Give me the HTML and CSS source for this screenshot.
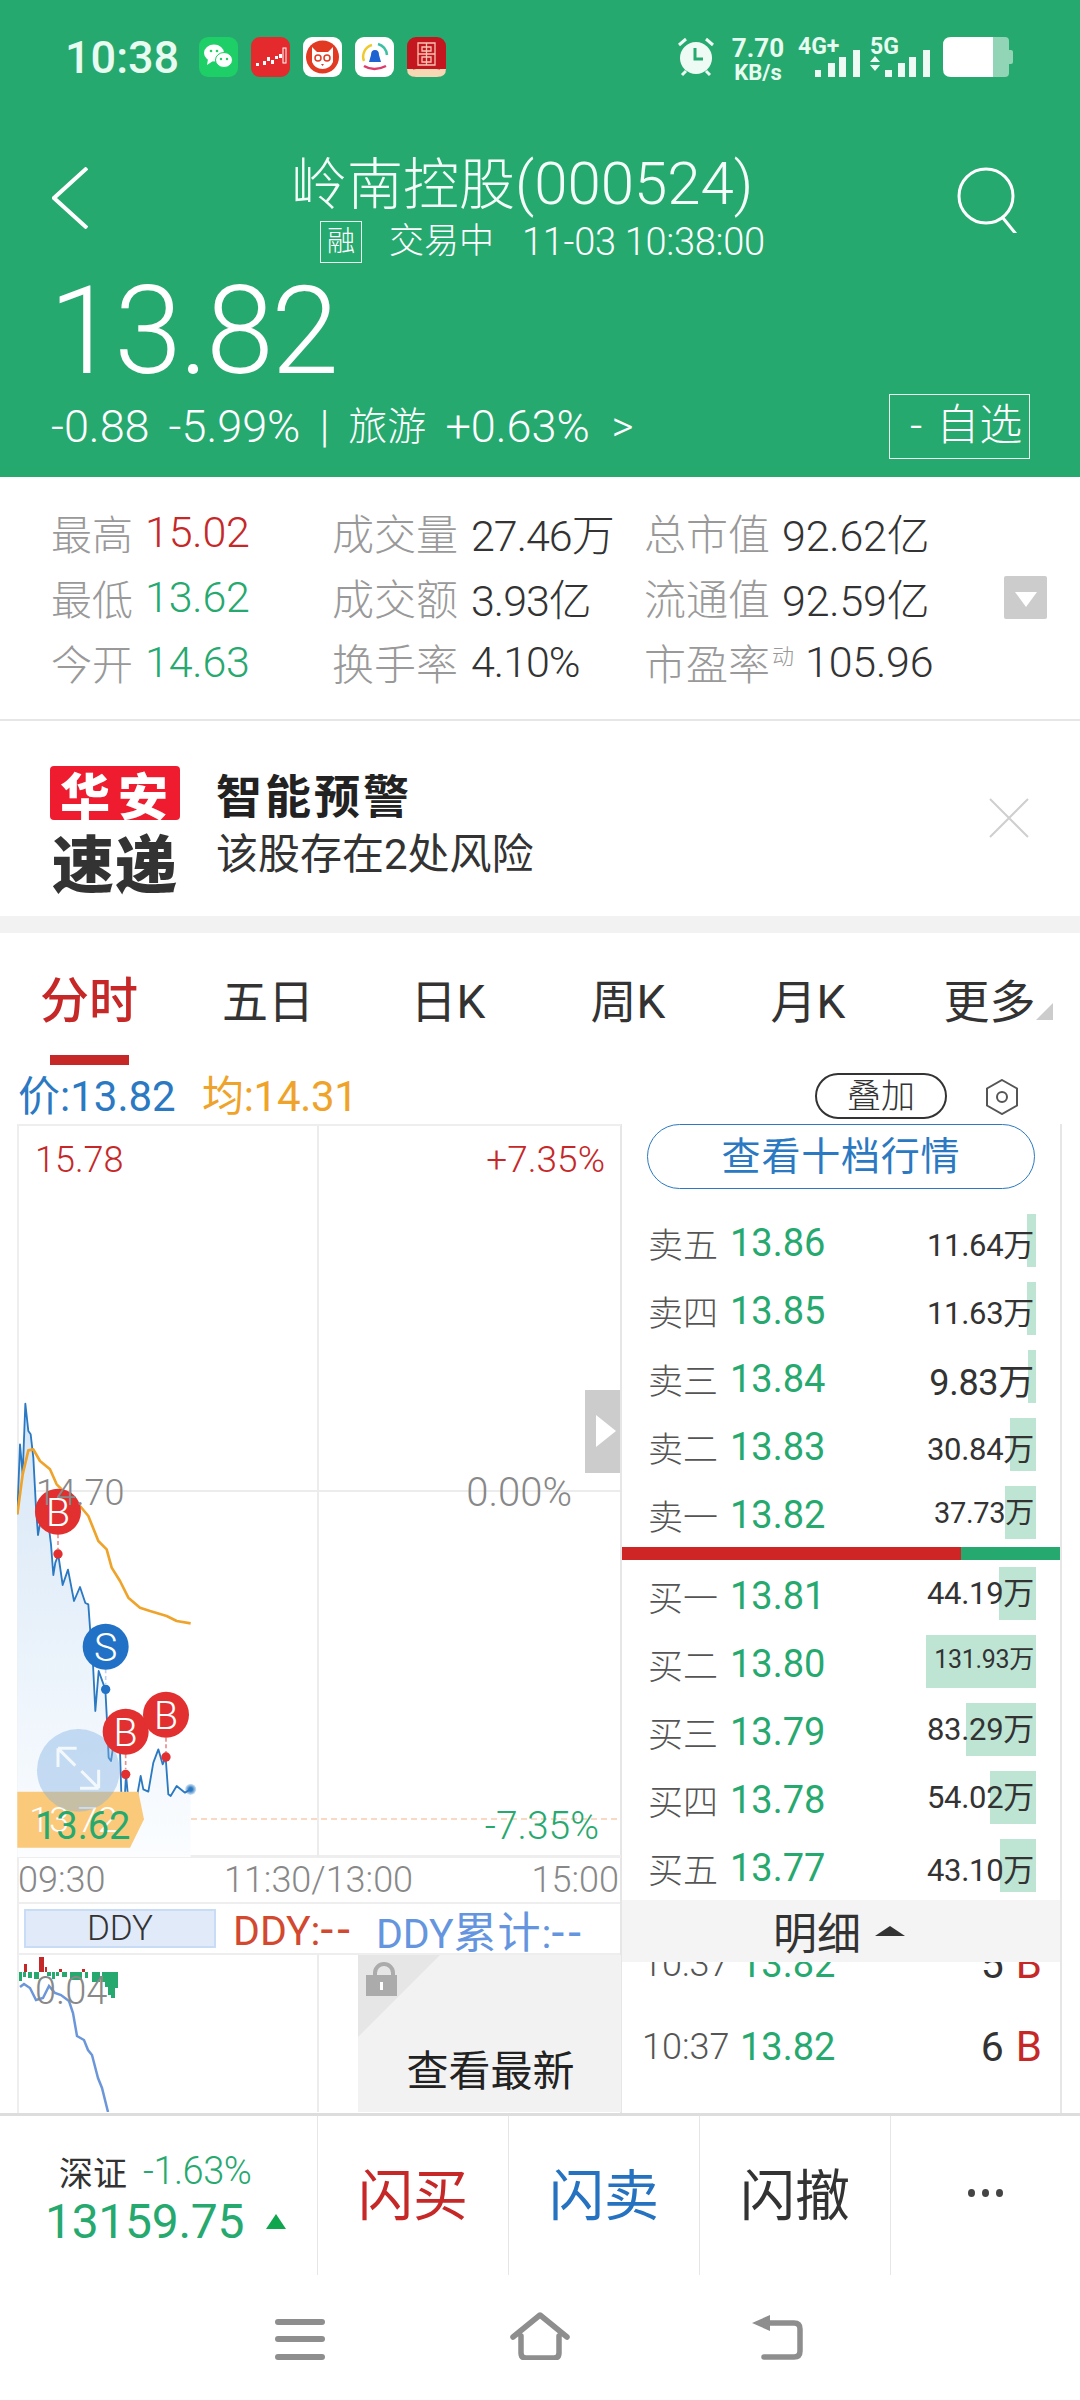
FILE: index.html
```html
<!DOCTYPE html>
<html lang="zh">
<head>
<meta charset="utf-8">
<title>岭南控股</title>
<link rel="stylesheet" href="styles.css">
</head>
<body>
<div class="page">
  <header class="head">
    <div class="status">
      <span class="clock">10:38</span>
      <div class="apps">
        <svg class="app" viewBox="0 0 39 40"><rect width="39" height="40" rx="9" fill="#1DCF66"/><ellipse cx="15" cy="16" rx="10" ry="8.500" fill="#fff"/><path d="M9 22l-1 6 6-4z" fill="#fff"/><ellipse cx="25" cy="23" rx="8.500" ry="7.500" fill="#fff" stroke="#1DCF66"/><circle cx="12" cy="14" r="1.300" fill="#1DCF66"/><circle cx="18" cy="14" r="1.300" fill="#1DCF66"/><circle cx="22" cy="22" r="1.200" fill="#1DCF66"/><circle cx="28" cy="22" r="1.200" fill="#1DCF66"/></svg>
        <svg class="app" viewBox="0 0 39 40"><rect width="39" height="40" rx="9" fill="#E42A2C"/><path d="M5 26h3v3H5zM12 24h3v4h-3zM16 20h3v4h-3zM20 23h3v4h-3zM24 19h3v3h-3zM28 17h3v4h-3z" fill="#fff"/><rect x="32" y="11" width="3" height="15" fill="none" stroke="#fff"/></svg>
        <svg class="app" viewBox="0 0 39 40"><rect width="39" height="40" rx="9" fill="#fff"/><circle cx="19.500" cy="20" r="16.500" fill="#E23A22"/><path d="M9 10l5 5h11l5-5v15q-3 7-10.500 7T9 25z" fill="#fff"/><circle cx="15" cy="21" r="3" fill="none" stroke="#E23A22" stroke-width="1.500"/><circle cx="24" cy="21" r="3" fill="none" stroke="#E23A22" stroke-width="1.500"/><path d="M18 27h3l-1.500 2z" fill="#E23A22"/></svg>
        <svg class="app" viewBox="0 0 39 40"><rect width="39" height="40" rx="9" fill="#fff"/><path d="M9 24A12 12 0 0 1 17 8" fill="none" stroke="#EFC92F" stroke-width="2.500"/><path d="M23 7a13 13 0 0 1 9 11" fill="none" stroke="#3EC0A5" stroke-width="2.500"/><path d="M9 29q10 6 22 0" fill="none" stroke="#DC3A6B" stroke-width="2.500"/><path d="M20 13q4 0 4 5l2 7H14l2-7q0-5 4-5z" fill="#1E63D2"/></svg>
        <svg class="app" viewBox="0 0 39 40"><rect width="39" height="40" rx="9" fill="#C4161E"/><path d="M0 32h39q0 8-9 8H9q-9 0-9-8z" fill="#F6D8B4"/><path d="M6 32l13.500-2L33 32" fill="none" stroke="#C4161E"/><path d="M11 6h17v22H11zM11 17h17M19.500 6v22M15 10h9v4h-9zM15 20h9v5h-9z" fill="none" stroke="#F5C6B4" stroke-width="1.300"/></svg>
      </div>
      <div class="sysicons">
        <svg class="alarm" viewBox="0 0 40 40"><circle cx="20" cy="21" r="16" fill="#EDFBF4"/><path d="M3 8l7-6M37 8l-7-6M6 38l4-4M34 38l-4-4" stroke="#EDFBF4" stroke-width="3" fill="none"/><path d="M19 11v11h8" stroke="#26A96F" stroke-width="3" fill="none"/></svg>
        <div class="speed"><span class="speed-num">7.70</span><span class="speed-unit">KB/s</span></div>
        <div class="signal signal-4g">
          <span class="net">4G+</span>
          <svg class="bars" viewBox="0 0 46 27"><path d="M1 27V20h6v7zM14 27V13h7v14zM25 27V7h7v20zM39 27V0h7v27z" fill="#EDFBF4"/></svg>
        </div>
        <div class="signal signal-5g">
          <span class="net">5G</span>
          <svg class="bars bars-5g" viewBox="0 0 60 27"><path d="M0 12l5-6 5 6zM0 15h10l-5 6zM15 27V20h7v7zM28 27V13h7v14zM39 27V7h7v20zM53 27V0h7v27z" fill="#EDFBF4"/></svg>
        </div>
        <svg class="battery" viewBox="0 0 70 40"><path d="M50 0h12q4 0 4 4v32q0 4-4 4H50zM66 13h2q2 0 2 2v10q0 2-2 2h-2z" fill="#92D4B6"/><path d="M8 0h42v40H8q-8 0-8-8V8q0-8 8-8z" fill="#fff"/></svg>
      </div>
    </div>
    <div class="topbar">
      <svg class="back" viewBox="0 0 36 62"><path d="M35 1L2 31l33 30" fill="none" stroke="#fff" stroke-width="4"/></svg>
      <div class="ident">
        <h1 class="title">岭南控股<span class="title-code">(000524)</span></h1>
        <div class="sub"><span class="margin-tag">融</span><span class="trading">交易中</span><span class="stamp">11-03 10:38:00</span></div>
      </div>
      <svg class="search" viewBox="0 0 66 66"><circle cx="30" cy="29" r="27" fill="none" stroke="#fff" stroke-width="3"/><path d="M47 51l16 13" fill="none" stroke="#fff" stroke-width="3" transform="rotate(12 47 51)"/></svg>
    </div>
    <div class="price">13.82</div>
    <div class="change">
      <div class="change-text"><span>-0.88</span><span>-5.99%</span><span class="pipe">|</span><span class="sector">旅游</span><span>+0.63%</span><span class="chev">&gt;</span></div>
      <div class="watch"><span class="watch-minus">-</span>自选</div>
    </div>
  </header>

  <section class="stats">
    <div class="stat-grid">
      <div class="stat s1"><span class="lab">最高</span><span class="up">15.02</span></div>
      <div class="stat s2"><span class="lab">成交量</span><span class="val">27.46万</span></div>
      <div class="stat s3"><span class="lab">总市值</span><span class="val">92.62亿</span></div>
      <div class="stat s1"><span class="lab">最低</span><span class="dn">13.62</span></div>
      <div class="stat s2"><span class="lab">成交额</span><span class="val">3.93亿</span></div>
      <div class="stat s3"><span class="lab">流通值</span><span class="val">92.59亿</span></div>
      <div class="stat s1"><span class="lab">今开</span><span class="dn">14.63</span></div>
      <div class="stat s2"><span class="lab">换手率</span><span class="val">4.10%</span></div>
      <div class="stat s3"><span class="lab">市盈率<sup class="dyn">动</sup></span><span class="val val-pe">105.96</span></div>
    </div>
    <div class="more-btn"></div>
  </section>

  <section class="alert">
    <div class="alert-logo"><span class="logo-red">华安</span><span class="logo-dark">速递</span></div>
    <div class="alert-text"><strong class="alert-title">智能预警</strong><span class="alert-body">该股存在2处风险</span></div>
    <svg class="alert-close" viewBox="0 0 40 40"><path d="M1 1l38 38M39 1L1 39" stroke="#cfcfcf" stroke-width="2" fill="none"/></svg>
  </section>
  <div class="band"></div>

  <nav class="tabs">
    <span class="tab tab-on">分时</span><span class="tab">五日</span><span class="tab">日K</span><span class="tab">周K</span><span class="tab">月K</span><span class="tab tab-more">更多</span>
  </nav>

  <div class="legend">
    <span class="leg-price">价:13.82</span><span class="leg-avg">均:14.31</span>
    <span class="overlay-btn">叠加</span>
    <svg class="hex" viewBox="0 0 36 36"><path d="M18 1l15 8.500v17L18 35 3 26.500v-17z" fill="none" stroke="#555" stroke-width="2"/><circle cx="18" cy="18" r="5" fill="none" stroke="#555" stroke-width="2"/></svg>
  </div>

  <main class="body">
    <div class="charts">
      <div class="chart">
        <svg class="chart-svg" viewBox="17 1125 603 731">
          <defs>
            <linearGradient id="area" x1="0" y1="0" x2="0" y2="1"><stop offset="0" stop-color="#D6E6F6"/><stop offset="1" stop-color="#FBFDFF"/></linearGradient>
            <radialGradient id="glow"><stop offset="0.3" stop-color="#2B79C2"/><stop offset="1" stop-color="#2B79C2" stop-opacity=".15"/></radialGradient>
          </defs>
          <path d="M17 1490H620M318 1125V1856" stroke="#ECECEC" stroke-width="2" fill="none"/>
          <path d="M141 1818H620" stroke="#F7CDB0" stroke-width="1.500" stroke-dasharray="6 4" fill="none"/>
          <g transform="translate(0 1380) scale(.33333)">
            <path d="M52 400L60 190 68 280 76 68 85 150 92 160 100 230 108 380 114 462 125 400 148 450 153 490 160 582 166 545 175 522 188 612 204 566 222 660 240 618 256 666 265 670 270 740 278 830 286 990 296 870 316 925 320 1000 326 1130 333 1140 345 1060 360 1110 368 1365 378 1180 388 1290 400 1245 412 1240 422 1185 430 1225 445 1232 460 1145 475 1105 488 1150 497 1130 505 1240 512 1245 530 1215 555 1235 572 1225V1428H52Z" fill="url(#area)"/>
            <path d="M52 400L60 190 68 280 76 68 85 150 92 160 100 230 108 380 114 462 125 400 148 450 153 490 160 582 166 545 175 522 188 612 204 566 222 660 240 618 256 666 265 670 270 740 278 830 286 990 296 870 316 925 320 1000 326 1130 333 1140 345 1060 360 1110 368 1365 378 1180 388 1290 400 1245 412 1240 422 1185 430 1225 445 1232 460 1145 475 1105 488 1150 497 1130 505 1240 512 1245 530 1215 555 1235 572 1225" fill="none" stroke="#2B79C2" stroke-width="5.500" stroke-linejoin="round"/>
            <path d="M52 400L68 280 85 208 100 205 120 240 150 265 170 310 205 345 240 375 265 405 295 480 320 505 335 560 360 600 385 650 420 680 450 690 500 705 530 720 572 727" fill="none" stroke="#EFA32A" stroke-width="8" stroke-linejoin="round"/>
            <circle cx="572" cy="1225" r="17" fill="url(#glow)"/>
            <path d="M52 1232H415L432 1315 390 1400H52Z" fill="#FBC97A"/>
            <text class="tag-under" x="88" y="1352">13.72</text>
            <circle cx="235" cy="1168" r="124" fill="#7FB0E2" fill-opacity=".42"/>
            <path d="M174 1102l52 52M174 1102h56M174 1102v56M296 1222l-52-52M296 1222h-56M296 1222v-56" stroke="#fff" stroke-opacity=".8" stroke-width="9" fill="none"/>
            <g class="mark mark-buy"><path class="mark-dash" d="M174 460V505"/><circle cx="174" cy="519" r="14"/><circle cx="174" cy="392" r="69"/><text x="174" y="435">B</text></g>
            <g class="mark mark-sell"><path class="mark-dash" d="M317 865V910"/><circle cx="317" cy="925" r="14"/><circle cx="317" cy="797" r="69"/><text x="317" y="840">S</text></g>
            <g class="mark mark-buy"><path class="mark-dash" d="M377 1120V1165"/><circle cx="377" cy="1180" r="14"/><circle cx="377" cy="1052" r="69"/><text x="377" y="1095">B</text></g>
            <g class="mark mark-buy"><path class="mark-dash" d="M498 1070V1115"/><circle cx="498" cy="1128" r="14"/><circle cx="498" cy="1001" r="69"/><text x="498" y="1044">B</text></g>
          </g>
        </svg>
        <span class="axis axis-tl up">15.78</span>
        <span class="axis axis-tr up">+7.35%</span>
        <span class="axis axis-ml">14.70</span>
        <span class="axis axis-mr">0.00%</span>
        <span class="axis axis-bl dn">13.62</span>
        <span class="axis axis-br dn">-7.35%</span>
        <div class="chart-arrow"></div>
      </div>
      <div class="times"><span>09:30</span><span>11:30/13:00</span><span>15:00</span></div>
      <div class="ddy"><span class="ddy-tag">DDY</span><span class="ddy-a">DDY:<span class="ddy-dash">--</span></span><span class="ddy-b">DDY<span class="ddy-cum">累计</span>:<span class="ddy-dash">--</span></span></div>
      <div class="lower">
        <svg class="lower-svg" viewBox="17 1955 341 157">
          <path d="M318 1955V2112" stroke="#ECECEC" stroke-width="2"/>
          <path d="M24 1964h3v8h-3zM39 1957h5v15h-5zM45 1967h2v5h-2zM59 1969h3v3h-3zM82 1969h3v3h-3z" fill="#C62828"/>
          <path d="M19 1972h3v9h-3zM23 1972h3v5h-3zM28 1972h4v6h-4zM34 1972h5v7h-5zM47 1972h4v4h-4zM52 1972h3v7h-3zM56 1972h3v4h-3zM62 1972h5v5h-5zM70 1972h12v8h-12zM85 1972h3v6h-3zM92 1972h8v10h-8zM102 1972h3v10h-3zM105 1972h3v15h-3zM108 1972h3v23h-3zM111 1972h4v26h-4zM115 1972h3v16h-3z" fill="#26A96F"/>
          <path d="M20 1987L24 1984 30 1988 36 2000 43 1998 49 1986 55 1993 61 1995 69 2001 73 2013 77 2036 84 2040 88 2050 92 2055 98 2078 102 2088 108 2112" fill="none" stroke="#6C96DA" stroke-width="2.500"/>
        </svg>
        <span class="lower-val">0.04</span>
        <div class="locked">
          <svg class="lock" viewBox="0 0 82 82"><path d="M0 0h82L0 82z" fill="#E6E6E6"/><path d="M14 18v-3a9 9 0 0 1 18 0v3" transform="translate(3 3)" fill="none" stroke="#ABABAB" stroke-width="4"/><rect x="8" y="20" width="31" height="21" fill="#ABABAB"/><rect x="22" y="27" width="3" height="8" fill="#fff"/></svg>
          <span class="locked-text">查看最新</span>
        </div>
      </div>
    </div>

    <aside class="book">
      <div class="ten">查看十档行情</div>
      <div class="quotes">
        <div class="quote"><i class="depth" style="width:9px"></i><span class="q-lab">卖五</span><span class="q-price">13.86</span><span class="q-vol">11.64万</span></div>
        <div class="quote"><i class="depth" style="width:9px"></i><span class="q-lab">卖四</span><span class="q-price">13.85</span><span class="q-vol">11.63万</span></div>
        <div class="quote"><i class="depth" style="width:8px"></i><span class="q-lab">卖三</span><span class="q-price">13.84</span><span class="q-vol q-big">9.83万</span></div>
        <div class="quote"><i class="depth" style="width:26px"></i><span class="q-lab">卖二</span><span class="q-price">13.83</span><span class="q-vol">30.84万</span></div>
        <div class="quote"><i class="depth" style="width:31px"></i><span class="q-lab">卖一</span><span class="q-price">13.82</span><span class="q-vol q-small q-lift">37.73万</span></div>
      </div>
      <div class="ratio"><i class="ratio-buy"></i><i class="ratio-sell"></i></div>
      <div class="quotes quotes-buy">
        <div class="quote"><i class="depth" style="width:37px"></i><span class="q-lab">买一</span><span class="q-price">13.81</span><span class="q-vol q-lift">44.19万</span></div>
        <div class="quote"><i class="depth" style="width:110px"></i><span class="q-lab">买二</span><span class="q-price">13.80</span><span class="q-vol q-tiny q-lift2">131.93万</span></div>
        <div class="quote"><i class="depth" style="width:70px"></i><span class="q-lab">买三</span><span class="q-price">13.79</span><span class="q-vol q-lift">83.29万</span></div>
        <div class="quote"><i class="depth" style="width:46px"></i><span class="q-lab">买四</span><span class="q-price">13.78</span><span class="q-vol q-lift">54.02万</span></div>
        <div class="quote"><i class="depth" style="width:36px"></i><span class="q-lab">买五</span><span class="q-price">13.77</span><span class="q-vol">43.10万</span></div>
      </div>
      <div class="detail-bar">明细<i class="detail-caret"></i></div>
      <div class="trades">
        <div class="trade"><span class="t-time">10:37</span><span class="t-price">13.82</span><span class="t-vol">5</span><span class="t-side">B</span></div>
        <div class="trade"><span class="t-time">10:37</span><span class="t-price">13.82</span><span class="t-vol">6</span><span class="t-side">B</span></div>
      </div>
    </aside>
  </main>

  <footer class="dock">
    <div class="index">
      <div class="index-top"><span class="index-name">深证</span><span class="index-pct">-1.63%</span></div>
      <div class="index-main"><span class="index-num">13159.75</span><i class="index-arrow"></i></div>
    </div>
    <div class="act act-buy">闪买</div>
    <div class="act act-sell">闪卖</div>
    <div class="act act-undo">闪撤</div>
    <div class="act act-more"><i></i><i></i><i></i></div>
  </footer>

  <div class="sysnav">
    <svg class="nav-menu" viewBox="0 0 50 42"><path d="M3 3h44M3 20h44M3 38h44" stroke="#8E8E8E" stroke-width="6" stroke-linecap="round" fill="none"/></svg>
    <svg class="nav-home" viewBox="0 0 60 48"><path d="M3 25L30 3l27 22M11 24v17q0 5 5 5h28q5 0 5-5V24" stroke="#8E8E8E" stroke-width="5.500" stroke-linecap="round" stroke-linejoin="round" fill="none"/></svg>
    <svg class="nav-back" viewBox="0 0 54 46"><path d="M12 9h32q6 0 6 6v22q0 6-6 6H14" stroke="#8E8E8E" stroke-width="5.500" stroke-linecap="round" fill="none"/><path d="M2 9L20 1v16z" fill="#8E8E8E"/></svg>
  </div>
</div>
</body>
</html>
```
FILE: styles.css
```css
* { box-sizing: border-box; }
html, body { margin: 0; padding: 0; background: #fff; }
body { font-family: Roboto, "Noto Sans CJK SC", sans-serif; font-weight: 300; color: #333; }
i { display: block; font-style: normal; }
.page { width: 1080px; height: 2400px; overflow: hidden; display: flex; flex-direction: column; }
.up { color: #C62828; }
.dn { color: #26A96F; }

/* header */
.head { height: 477px; background: #26A96F; color: #fff; flex: none; }
.status { height: 114px; display: flex; align-items: center; padding-left: 65px; color: #E8FBF1; }
.clock { font-size: 45px; font-weight: 500; width: 134px; }
.apps { display: flex; gap: 13px; }
.app { width: 39px; height: 40px; display: block; }
.sysicons { margin-left: 230px; display: flex; align-items: flex-start; height: 42px; }
.alarm { width: 40px; height: 40px; margin-top: 1px; }
.speed { margin-left: 17px; width: 50px; display: flex; flex-direction: column; align-items: center; font-weight: 700; }
.speed-num { font-size: 26px; line-height: 24px; }
.speed-unit { font-size: 22px; line-height: 24px; margin-top: 1px; }
.signal { position: relative; height: 41px; }
.signal-4g { margin-left: 15px; width: 64px; }
.signal-5g { margin-left: 8px; width: 64px; }
.net { position: absolute; left: 0; top: 0; font-size: 23px; line-height: 22px; font-weight: 700; white-space: nowrap; }
.bars { position: absolute; right: 2px; bottom: 0; width: 46px; height: 27px; }
.bars-5g { width: 60px; right: 0; left: 0; }
.battery { width: 70px; height: 40px; margin-left: 9px; margin-top: 1px; }

.topbar { display: flex; margin-top: 35px; height: 115px; }
.back { width: 36px; height: 62px; margin: 18px 0 0 52px; }
.ident { margin-left: 203px; width: 500px; }
.title { margin: 0; font-size: 56px; line-height: 70px; font-weight: 300; white-space: nowrap; color: #F4FFF9; }
.title-code { font-size: 60px; }
.sub { display: flex; align-items: center; height: 44px; margin-left: 29px; font-size: 35px; line-height: 44px; }
.margin-tag { width: 42px; height: 42px; border: 1px solid #E8FBF1; font-size: 28px; line-height: 40px; text-align: center; }
.trading { margin-left: 27px; }
.stamp { margin-left: 28px; white-space: nowrap; font-size: 38px; letter-spacing: -.3px; }
.search { width: 66px; height: 66px; margin: 18px 0 0 165px; }
.price { margin: 18px 0 0 49px; height: 100px; font-size: 122px; line-height: 100px; letter-spacing: -2.500px; }
.change { display: flex; justify-content: space-between; margin-top: 12px; padding: 0 50px 0 51px; height: 65px; align-items: center; }
.change-text { display: flex; align-items: center; gap: 19px; font-size: 45px; line-height: 50px; white-space: nowrap; }
.sector { font-size: 39px; }
.chev { font-size: 42px; margin-left: 3px; }
.watch { width: 141px; height: 65px; border: 1px solid #E8FBF1; font-size: 43px; line-height: 60px; padding-left: 20px; white-space: nowrap; }
.watch-minus { margin-right: 14px; }

/* stats */
.stats { flex: none; height: 244px; padding: 22px 33px 0 51px; border-bottom: 2px solid #E6E6E6; display: flex; justify-content: space-between; }
.stat-grid { display: grid; grid-template-columns: 281px 312px 321px; grid-auto-rows: 65px; }
.stat { display: flex; align-items: center; font-size: 43px; letter-spacing: -1px; white-space: nowrap; }
.s1, .s3 { letter-spacing: -.2px; }
.lab { color: #999; font-size: 41px; letter-spacing: 0; }
.s1 .lab { width: 94px; }
.s2 .lab { width: 139px; font-size: 42px; }
.s3 .lab { width: 138px; font-size: 42px; }
.val { color: #333; }
.val-pe { margin-left: 23px; }
.dyn { font-size: 22px; color: #999; line-height: 0; vertical-align: 16px; margin-left: 2px; }
.more-btn { width: 43px; height: 43px; margin-top: 77px; border-radius: 2px; background: #CCC; position: relative; }
.more-btn::after { content: ""; position: absolute; left: 11px; top: 16px; border: 11px solid transparent; border-top: 15px solid #fff; border-bottom: 0; }

/* alert */
.alert { flex: none; height: 195px; display: flex; padding-left: 50px; }
.alert-logo { width: 130px; display: flex; flex-direction: column; align-items: center; padding-top: 45px; }
.logo-red { width: 130px; height: 54px; border-radius: 4px; background: #EE1C2E; color: #fff; font-weight: 900; font-size: 50px; line-height: 54px; text-align: center; letter-spacing: 8px; padding-left: 6px; font-family: "Noto Sans CJK SC", sans-serif; }
.logo-dark { margin-top: 12px; color: #333; font-weight: 900; font-size: 62px; line-height: 58px; letter-spacing: 1px; font-family: "Noto Sans CJK SC", sans-serif; white-space: nowrap; }
.alert-text { margin-left: 36px; padding-top: 50px; display: flex; flex-direction: column; }
.alert-title { font-size: 46px; line-height: 52px; font-weight: 700; letter-spacing: 3px; color: #222; }
.alert-body { margin-top: 6px; font-size: 42px; line-height: 52px; font-weight: 400; color: #333; white-space: nowrap; }
.alert-close { width: 40px; height: 40px; margin: 77px 0 0 455px; }
.band { flex: none; height: 17px; background: #F2F2F2; }

/* tabs */
.tabs { flex: none; height: 132px; display: flex; margin-left: -2px; }
.tab { width: 180px; padding-top: 38px; text-align: center; font-size: 46px; line-height: 62px; font-weight: 400; color: #333; position: relative; }
.tab-on { color: #C62828; font-size: 49px; font-weight: 500; margin-left: 2px; width: 178px; padding-right: 0; }
.tab-on::after { content: ""; position: absolute; left: 50px; bottom: 0; width: 79px; height: 10px; background: #C62828; }
.tab-more { padding-left: 3px; }
.tab-more::after { content: ""; position: absolute; left: 138px; top: 70px; border-style: solid; border-width: 0 0 17px 17px; border-color: transparent transparent #CCC transparent; }

/* legend */
.legend { flex: none; height: 59px; display: flex; align-items: center; padding: 0 0 5px 18px; font-size: 42px; font-weight: 400; }
.leg-price { color: #2B79C2; width: 184px; }
.leg-avg { color: #EFA32A; width: 613px; letter-spacing: -.3px; }
.overlay-btn { width: 132px; height: 46px; margin-top: 7px; border: 2px solid #333; border-radius: 23px; font-size: 34px; line-height: 42px; text-align: center; font-weight: 300; }
.hex { width: 36px; height: 36px; margin: 9px 0 0 37px; }

/* main */
.body { flex: none; height: 989px; display: flex; padding-left: 17px; }
.charts { width: 604px; flex: none; display: flex; flex-direction: column; border-left: 2px solid #EEE; }
.chart { position: relative; height: 734px; border-top: 2px solid #EEE; border-bottom: 3px solid #EEE; margin-left: -2px; }
.chart-svg { position: absolute; left: 0; top: 0; width: 603px; height: 731px; display: block; }
.axis { position: absolute; font-size: 36px; line-height: 40px; color: #888; white-space: nowrap; }
.axis.up { color: #C62828; }
.axis.dn { color: #26A96F; }
.axis-tl { left: 18px; top: 14px; }
.axis-tr { right: 16px; top: 14px; font-size: 37px; }
.axis-ml { left: 19px; top: 347px; }
.axis-mr { right: 49px; top: 347px; font-size: 40px; }
.axis-bl { left: 18px; top: 680px; font-size: 38px; font-weight: 400; }
.axis-br { right: 22px; top: 680px; font-size: 39px; }
.chart-arrow { position: absolute; left: 568px; top: 264px; width: 35px; height: 83px; background: #CCC; }
.chart-arrow::after { content: ""; position: absolute; left: 11px; top: 25px; border: 16px solid transparent; border-left: 20px solid #fff; border-right: 0; }
.tag-under { font-size: 108px; fill: #FFF; font-family: Roboto, sans-serif; }
.mark circle { stroke: none; }
.mark text { font-size: 118px; font-family: Roboto, sans-serif; font-weight: 300; fill: #fff; text-anchor: middle; }
.mark-buy circle { fill: #E22F2F; }
.mark-sell circle { fill: #2172C6; }
.mark-dash { stroke: #E69090; stroke-width: 5; stroke-dasharray: 12 8; fill: none; }
.mark-sell .mark-dash { stroke: #BBD3EE; }

.times { height: 44px; margin-left: -1px; display: flex; justify-content: space-between; align-items: center; font-size: 36px; color: #888; padding-right: 2px; }
.ddy { height: 53px; display: flex; align-items: center; border-top: 2px solid #EEE; border-bottom: 2px solid #EEE; padding-left: 5px; font-size: 41px; font-weight: 400; white-space: nowrap; }
.ddy-tag { width: 192px; height: 39px; background: #E0EAF8; border: 2px solid #C9DCF6; font-size: 35px; line-height: 35px; text-align: center; color: #333; font-weight: 300; }
.ddy-a { margin-left: 17px; color: #D2492F; }
.ddy-b { margin-left: 22px; color: #6495DE; }
.ddy-cum { font-size: 43px; letter-spacing: 1px; }
.ddy-dash { font-size: 46px; letter-spacing: 4px; }
.lower { position: relative; height: 157px; margin-left: -2px; }
.lower-svg { position: absolute; left: 0; top: 0; width: 341px; height: 157px; display: block; }
.lower-val { position: absolute; left: 18px; top: 16px; font-size: 38px; line-height: 40px; color: #888; }
.locked { position: absolute; left: 341px; top: 0; width: 263px; height: 157px; background: #F2F2F2; padding-top: 92px; text-align: center; }
.lock { position: absolute; left: 0; top: 0; width: 82px; height: 82px; }
.locked-text { font-size: 42px; line-height: 50px; font-weight: 400; color: #222; margin-left: 2px; display: block; white-space: nowrap; }

/* order book */
.book { width: 442px; flex: none; border-left: 2px solid #E6E6E6; border-right: 2px solid #E6E6E6; margin-left: -1px; }
.ten { width: 388px; height: 65px; margin-left: 25px; border: 1px solid #2B79C2; border-radius: 33px; color: #2B79C2; font-size: 39px; line-height: 65px; letter-spacing: .8px; text-align: center; font-weight: 400; white-space: nowrap; }
.quotes { margin-top: 25px; display: flex; flex-direction: column; gap: 15px; }
.quotes-buy { margin-top: 7px; }
.quote { position: relative; height: 53px; display: flex; align-items: center; padding: 4px 26px 0 26px; }
.depth { position: absolute; right: 24px; top: 0; bottom: 0; background: #BEE5D4; }
.q-lab { position: relative; font-size: 35px; color: #555; width: 82px; white-space: nowrap; }
.q-price { position: relative; font-size: 38px; color: #26A96F; font-weight: 400; }
.q-vol { position: relative; margin-left: auto; font-size: 31px; letter-spacing: -.3px; color: #333; font-weight: 400; white-space: nowrap; }
.q-big { font-size: 36px; }
.q-small { font-size: 29px; }
.q-tiny { font-size: 25px; }
.q-lift { padding-bottom: 10px; }
.q-lift2 { padding-bottom: 14px; }
.ratio { margin-top: 8px; height: 13px; display: flex; }
.ratio-buy { width: 339px; background: #CF2525; }
.ratio-sell { flex: 1; background: #26A96F; }
.detail-bar { margin-top: 8px; height: 62px; background: #F4F4F4; display: flex; align-items: center; justify-content: center; font-size: 44px; font-weight: 400; color: #333; padding-right: 4px; position: relative; z-index: 1; }
.detail-caret { width: 0; height: 0; margin-left: 14px; border: 15px solid transparent; border-bottom: 10px solid #333; border-top: 0; }
.trades { height: 151px; overflow: hidden; }
.trade { height: 83px; display: flex; align-items: center; padding: 0 18px 0 20px; font-weight: 400; }
.trade:first-child { margin-top: -40px; }
.t-time { font-size: 36px; color: #555; width: 98px; font-weight: 300; }
.t-price { font-size: 38px; color: #26A96F; }
.t-vol { margin-left: auto; font-size: 41px; color: #333; }
.t-side { margin-left: 12px; font-size: 42px; color: #C62828; }

/* dock */
.dock { flex: none; height: 162px; border-top: 3px solid #DDD; display: flex; }
.index { width: 318px; border-right: 1px solid #E6E6E6; padding: 33px 0 0 45px; }
.index-top { display: flex; align-items: center; height: 44px; margin-left: 14px; }
.index-name { font-size: 34px; color: #333; font-weight: 400; }
.index-pct { margin-left: 16px; font-size: 38px; letter-spacing: -.5px; color: #26A96F; }
.index-main { display: flex; align-items: center; height: 60px; margin-top: -2px; }
.index-num { font-size: 48px; font-weight: 400; color: #26A96F; letter-spacing: -.3px; }
.index-arrow { margin: 0 0 0 22px; border: 10px solid transparent; border-bottom: 15px solid #0FA64E; border-top: 0; }
.act { width: 191px; border-right: 1px solid #E6E6E6; display: flex; justify-content: center; align-items: center; font-size: 55px; font-weight: 400; padding-bottom: 10px; }
.act-buy { color: #C62828; }
.act-sell { color: #2472C0; }
.act-undo { color: #333; }
.act-more { flex: 1; border-right: 0; gap: 7px; padding-bottom: 6px; }
.act-more i { width: 7px; height: 8px; border-radius: 50%; background: #444; }

/* system nav */
.sysnav { flex: none; height: 127px; display: flex; align-items: flex-start; padding: 37px 0 0 275px; }
.nav-menu { width: 50px; height: 42px; margin-top: 7px; }
.nav-home { width: 60px; height: 48px; margin-left: 185px; }
.nav-back { width: 54px; height: 46px; margin-left: 180px; margin-top: 2px; }
```
